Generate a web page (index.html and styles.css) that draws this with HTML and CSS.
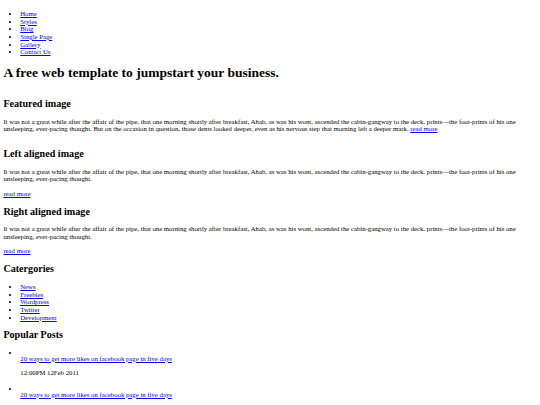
FILE: index.html
```html
<!DOCTYPE html>
<html lang="en">
<head>
<meta charset="utf-8">
<title>A free web template</title>
<link rel="stylesheet" href="styles.css">
</head>
<body>
<header class="site-header">
  <nav>
    <ul class="list nav">
      <li><a href="#">Home</a></li>
      <li><a href="#">Styles</a></li>
      <li><a href="#">Blog</a></li>
      <li><a href="#">Single Page</a></li>
      <li><a href="#">Gallery</a></li>
      <li><a href="#">Contact Us</a></li>
    </ul>
  </nav>
  <h1 class="title">A free web template to jumpstart your business.</h1>
</header>
<main>
  <article class="post featured">
    <h2 class="heading">Featured image</h2>
    <p class="text">It was not a great while after the affair of the pipe, that one morning shortly after breakfast, Ahab, as was his wont, ascended the cabin-gangway to the deck. prints—the foot-prints of his one unsleeping, ever-pacing thought. But on the occasion in question, those dents looked deeper, even as his nervous step that morning left a deeper mark. <a href="#">read more</a></p>
  </article>
  <article class="post">
    <h2 class="heading">Left aligned image</h2>
    <p class="text">It was not a great while after the affair of the pipe, that one morning shortly after breakfast, Ahab, as was his wont, ascended the cabin-gangway to the deck. prints—the foot-prints of his one unsleeping, ever-pacing thought.</p>
    <p class="text"><a href="#">read more</a></p>
  </article>
  <article class="post">
    <h2 class="heading">Right aligned image</h2>
    <p class="text">It was not a great while after the affair of the pipe, that one morning shortly after breakfast, Ahab, as was his wont, ascended the cabin-gangway to the deck. prints—the foot-prints of his one unsleeping, ever-pacing thought.</p>
    <p class="text"><a href="#">read more</a></p>
  </article>
</main>
<aside class="sidebar">
  <h2 class="heading">Catergories</h2>
  <ul class="list">
    <li><a href="#">News</a></li>
    <li><a href="#">Freebies</a></li>
    <li><a href="#">Wordpress</a></li>
    <li><a href="#">Twitter</a></li>
    <li><a href="#">Development</a></li>
  </ul>
  <h2 class="heading">Popular Posts</h2>
  <ul class="list popular">
    <li class="pop-item"><span class="pop-thumb"></span><div class="pop-title"><a href="#">20 ways to get more likes on facebook page in five days</a></div><p class="text pop-date">12:00PM 12Feb 2011</p></li>
    <li class="pop-item"><span class="pop-thumb"></span><div class="pop-title"><a href="#">20 ways to get more likes on facebook page in five days</a></div><p class="text pop-date">12:00PM 12Feb 2011</p></li>
  </ul>
</aside>
</body>
</html>
```
FILE: styles.css
```css
html {
  background: #ffffff;
}
body {
  margin: 3.375px;
  font-family: "Liberation Serif", "Times New Roman", serif;
  font-size: 6.75px;
  line-height: 7.59px;
  color: #000000;
}
a {
  color: #0000ee;
  text-decoration: underline;
}
.list {
  margin: 6.75px 0;
  padding-left: 16.875px;
  list-style: disc;
}
.title {
  font-size: 13.5px;
  line-height: 15.6px;
  font-weight: bold;
  margin: 9.05px 0;
}
.heading {
  font-size: 10.125px;
  line-height: 11.4px;
  font-weight: bold;
  margin: 8.4px 0;
}
.text {
  margin: 6.75px 0;
}
.featured {
  display: flow-root;
}
.pop-thumb {
  display: inline-block;
  width: 0;
  height: 0;
}
.pop-title {
  margin-top: -2.3px;
}
.pop-date {
  margin-bottom: 8.75px;
}
```
